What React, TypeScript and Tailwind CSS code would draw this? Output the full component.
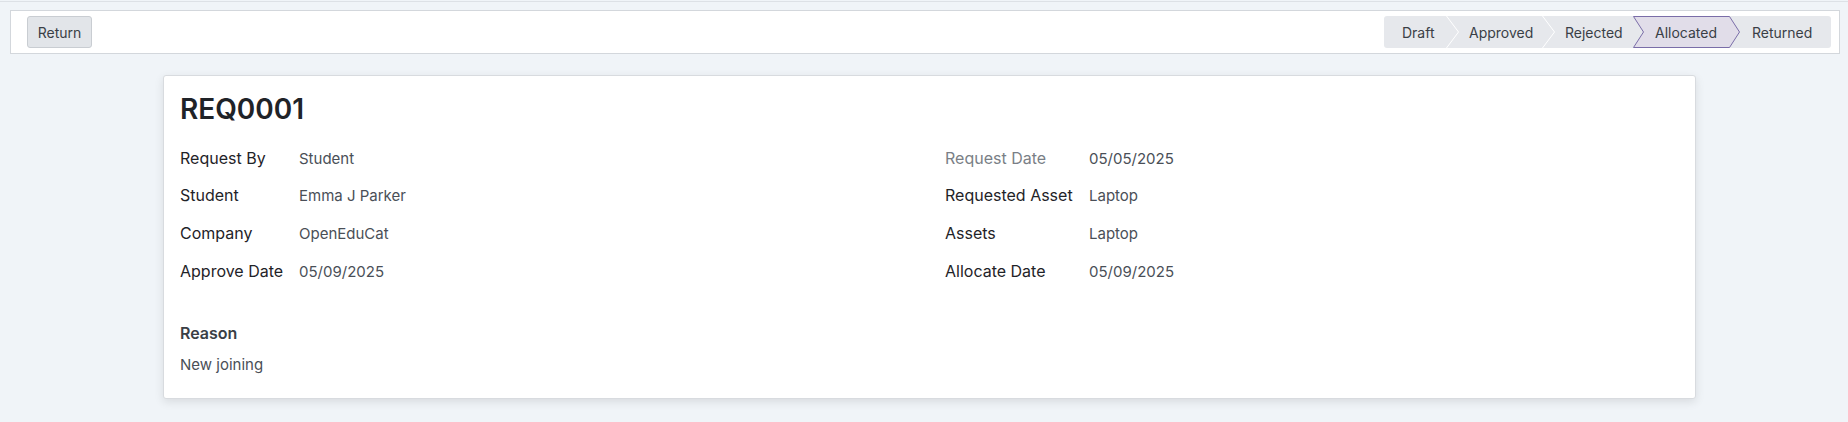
import React from "react";

const font = { fontFamily: "Inter, 'Noto Sans', sans-serif" };

function Seg({
  width,
  pl,
  label,
  chevron,
}: {
  width: string;
  pl: string;
  label: string;
  chevron?: boolean;
}) {
  return (
    <div className={`relative flex h-full items-center ${width} ${pl}`}>
      <span>{label}</span>
      {chevron && (
        <svg
          className="absolute right-0 top-0 h-8 w-[13px]"
          viewBox="0 0 13 32"
          fill="none"
        >
          <polyline points="0.5,0 12.5,16 0.5,32" stroke="#ffffff" strokeWidth="1" />
        </svg>
      )}
    </div>
  );
}

function Row({
  label,
  value,
  labelW,
  muted,
}: {
  label: string;
  value: string;
  labelW: string;
  muted?: boolean;
}) {
  return (
    <div className="flex h-[37.7px] items-center">
      <div className="flex items-baseline">
        <div
          className={`${labelW} shrink-0 text-[16px] ${muted ? "text-[#7a7f86]" : "text-[#1f2328]"}`}
        >
          {label}
        </div>
        <div className="text-[15px] text-[#4a4f57]">{value}</div>
      </div>
    </div>
  );
}

export default function App() {
  return (
    <div className="min-h-screen w-full bg-[#f0f4f8]" style={font}>
      <div className="h-px bg-[#f0f4f8]" />
      <div className="h-px bg-[#dde1e6]" />
      <div className="ml-[10px] mr-[8px] mt-[8px] flex h-[44px] items-start justify-between border border-[#d3d7dc] bg-white pl-[16px] pr-[8px] pt-[5px]">
        <button className="h-8 w-[65px] rounded-[3px] border border-[#c9cdd2] bg-[#e2e5e9] text-[14px] text-[#3a3f46]">
          Return
        </button>
        <div className="flex h-8 overflow-hidden rounded-[3px] bg-[#e6e8ec] text-[14px] text-[#3a3f46]">
          <Seg width="w-[75px]" pl="pl-[18px]" label="Draft" chevron />
          <Seg width="w-[96px]" pl="pl-[10px]" label="Approved" chevron />
          <Seg width="w-[78px]" pl="pl-[10px]" label="Rejected" />
          <div className="relative flex h-full w-[107px] items-center pl-[22px]">
            <svg
              className="absolute left-0 top-0 h-8 w-[107px]"
              viewBox="0 0 107 32"
              fill="none"
            >
              <polygon
                points="0.5,0.5 96.5,0.5 106.5,16 96.5,31.5 0.5,31.5 10.5,16"
                fill="#e1dde9"
                stroke="#7a6da8"
                strokeWidth="1"
              />
            </svg>
            <span className="relative">Allocated</span>
          </div>
          <Seg width="w-[91px]" pl="pl-[12px]" label="Returned" />
        </div>
      </div>

      <div className="flex pl-[163px] pt-[21px]">
        <div className="w-[1533px] rounded-[3px] border border-[#d8dbdf] bg-white px-4 pb-[23px] pt-[16px] shadow-[0_3px_10px_rgba(0,0,0,0.10)]">
          <h1 className="h-[34px] text-[28px] font-semibold leading-[34px] text-[#1f2328]">
            REQ0001
          </h1>
          <div className="mt-[13px] flex">
            <div className="w-[765px] shrink-0">
              <Row labelW="w-[119px]" label="Request By" value="Student" />
              <Row labelW="w-[119px]" label="Student" value="Emma J Parker" />
              <Row labelW="w-[119px]" label="Company" value="OpenEduCat" />
              <Row labelW="w-[119px]" label="Approve Date" value="05/09/2025" />
            </div>
            <div className="flex-1">
              <Row labelW="w-[144px]" label="Request Date" value="05/05/2025" muted />
              <Row labelW="w-[144px]" label="Requested Asset" value="Laptop" />
              <Row labelW="w-[144px]" label="Assets" value="Laptop" />
              <Row labelW="w-[144px]" label="Allocate Date" value="05/09/2025" />
            </div>
          </div>
          <div className="mt-[31px] h-6 text-[16px] font-semibold leading-6 text-[#3a3f46]">
            Reason
          </div>
          <div className="mt-[10px] h-5 text-[15px] leading-5 text-[#4a4f57]">New joining</div>
        </div>
      </div>
    </div>
  );
}
